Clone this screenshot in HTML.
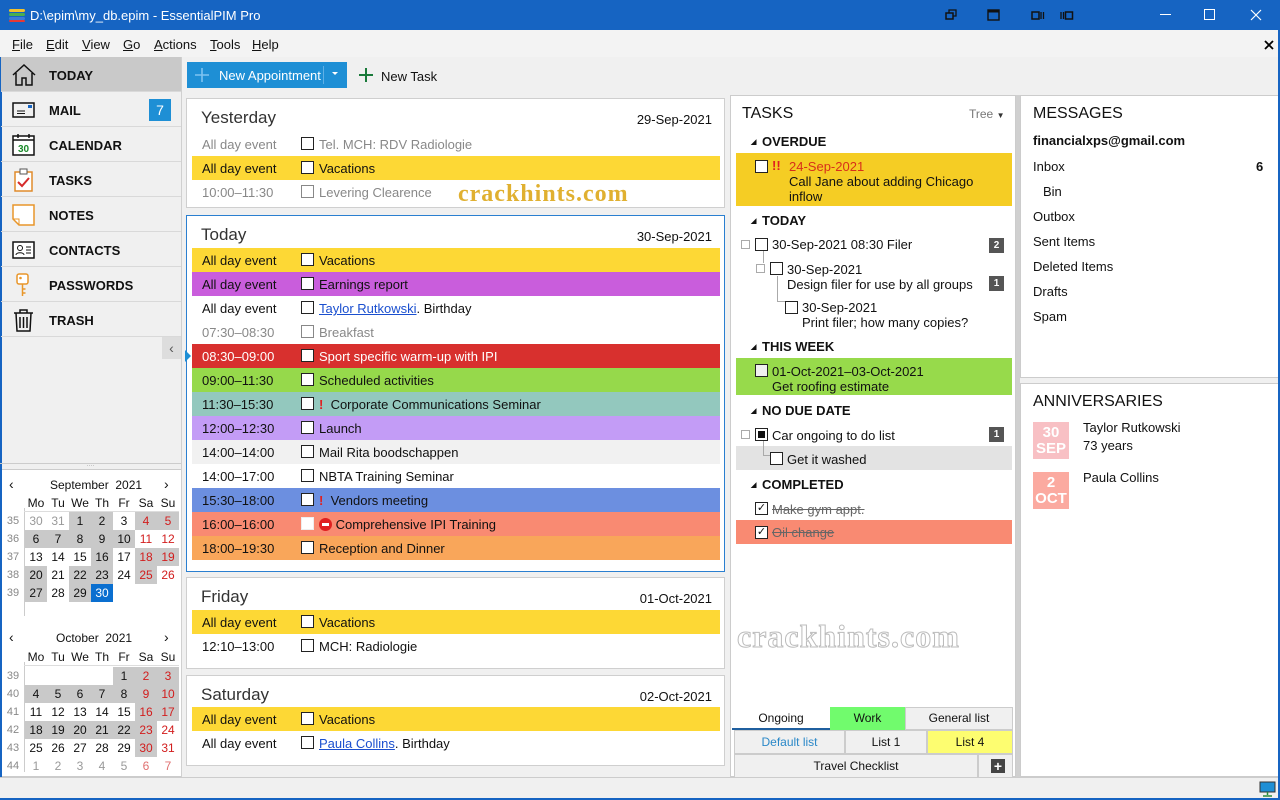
<!DOCTYPE html>
<html><head><meta charset="utf-8">
<style>
*{margin:0;padding:0;box-sizing:border-box}
body{width:1280px;height:800px;position:relative;overflow:hidden;font-family:"Liberation Sans",sans-serif;font-size:13px;color:#111;background:#f0f0f0}
.a{position:absolute}
#title{left:0;top:0;width:1280px;height:30px;background:#1664c2;color:#fff;font-size:13px}
#menu{left:0;top:30px;width:1280px;height:27px;background:#f3f3f3}
#menu span{position:absolute;top:7px;font-size:13px}
.side{left:1px;width:180px;height:35px;border-bottom:1px solid #d9d9d9;font-weight:bold;font-size:13px}
.side span{position:absolute;left:48px;top:11px}
.side svg{position:absolute;left:10px;top:6px}
.card{background:#fff;border:1px solid #cfcfcf;left:186px;width:539px}
.card h2{position:absolute;left:14px;top:9px;font-size:17px;font-weight:normal;color:#333}
.card .d{position:absolute;right:12px;top:13px;font-size:13px}
.row{position:absolute;left:5px;width:528px;height:24px;font-size:13px}
.row .t{position:absolute;left:10px;top:5px}
.row .c{position:absolute;left:109px;top:5px;width:13px;height:13px;border:1px solid #222;background:#fff}
.row .x{position:absolute;left:127px;top:5px}
.cal{font-size:12px}
.cal div{position:absolute;width:22px;height:18px;text-align:center;line-height:18px}
.g{background:#c9c9c9}.r{color:#d21d1d}.m{color:#999}.lr{color:#e07070}.wk{color:#888;font-size:11px}
.sec{position:absolute;left:18px;font-weight:bold;font-size:13px}
.sec:before{content:"◢";font-size:7px;position:absolute;left:-11px;top:4px}
.cb{position:absolute;width:13px;height:13px;border:1px solid #222;background:#fff}
.badge{position:absolute;width:15px;height:15px;background:#555;color:#fff;font-size:10px;text-align:center;line-height:15px;font-weight:bold}
.msg{position:absolute;left:12px;font-size:13px}
</style></head><body>

<div id="title" class="a">
 <svg class="a" style="left:9px;top:7px" width="18" height="16"><rect x="0" y="2" width="16" height="3" rx="1.5" fill="#f2c12e"/><rect x="0" y="6" width="16" height="3" rx="1.5" fill="#4caf50"/><rect x="0" y="10" width="16" height="3" rx="1.5" fill="#3e7bd6"/><rect x="0" y="13" width="16" height="2" rx="1" fill="#e53935"/></svg>
 <span class="a" style="left:30px;top:8px">D:\epim\my_db.epim - EssentialPIM Pro</span>
 <svg class="a" style="left:945px;top:9px" width="12" height="12"><rect x="1" y="4" width="7" height="6" fill="none" stroke="#111" stroke-width="1.5"/><path d="M4 4V1h7v6H8" fill="none" stroke="#111" stroke-width="1.3"/></svg>
 <svg class="a" style="left:987px;top:9px" width="13" height="12"><rect x="1" y="1" width="11" height="10" fill="none" stroke="#111" stroke-width="1.4"/><rect x="1" y="1" width="11" height="2.5" fill="#111"/></svg>
 <svg class="a" style="left:1031px;top:11px" width="14" height="9"><rect x="1" y="1" width="7" height="7" fill="none" stroke="#111" stroke-width="1.5"/><path d="M10 1v7M12.5 1v7" stroke="#111" stroke-width="1.3"/></svg>
 <svg class="a" style="left:1060px;top:11px" width="14" height="9"><rect x="5.5" y="1" width="7" height="7" fill="none" stroke="#111" stroke-width="1.5"/><path d="M1 1v7M3.5 1v7" stroke="#111" stroke-width="1.3"/></svg>
 <svg class="a" style="left:1160px;top:14px" width="11" height="2"><rect width="11" height="1" fill="#fff"/></svg>
 <svg class="a" style="left:1204px;top:9px" width="12" height="12"><rect x="0.5" y="0.5" width="10" height="10" fill="none" stroke="#fff"/></svg>
 <svg class="a" style="left:1250px;top:9px" width="12" height="12"><path d="M1 1l10 10M11 1L1 11" stroke="#fff" stroke-width="1.2"/></svg>
</div>

<div id="menu" class="a">
 <span style="left:12px"><u>F</u>ile</span><span style="left:46px"><u>E</u>dit</span><span style="left:82px"><u>V</u>iew</span><span style="left:123px"><u>G</u>o</span><span style="left:154px"><u>A</u>ctions</span><span style="left:210px"><u>T</u>ools</span><span style="left:252px"><u>H</u>elp</span>
 <svg class="a" style="left:1264px;top:10px" width="10" height="10"><path d="M1 1l8 8M9 1L1 9" stroke="#000" stroke-width="1.8"/></svg>
</div>

<div class="a" style="left:0;top:57px;width:182px;height:720px;background:#f0f0f0;border-right:1px solid #d0d0d0"></div>
<div class="a" style="left:0;top:57px;width:2px;height:743px;background:#1664c2"></div>
<div class="a side" style="top:57px;background:#c9c9c9"><svg width="26" height="24"><path d="M2 12L13 2l11 10M5 10v12h6v-7h4v7h6V10" fill="none" stroke="#111" stroke-width="1.5"/></svg><span>TODAY</span></div>
<div class="a side" style="top:92px"><svg width="26" height="24"><rect x="2" y="5" width="21" height="14" fill="none" stroke="#111" stroke-width="1.5"/><path d="M6 13h8M6 15.5h8" stroke="#111"/><rect x="17" y="7" width="4" height="3" fill="#1664c2"/></svg><span>MAIL</span><div class="a" style="left:148px;top:7px;width:22px;height:22px;background:#1e8fd5;color:#fff;text-align:center;line-height:22px;font-weight:normal;font-size:14px">7</div></div>
<div class="a side" style="top:127px"><svg width="26" height="24"><rect x="2" y="3" width="21" height="19" fill="#fff" stroke="#111" stroke-width="1.5"/><path d="M2 7h21M7 1v4M18 1v4" stroke="#111" stroke-width="1.5"/><text x="12.5" y="19" font-size="10" font-weight="bold" text-anchor="middle" fill="#1a8a2a" font-family="Liberation Sans">30</text></svg><span>CALENDAR</span></div>
<div class="a side" style="top:162px"><svg width="26" height="24"><rect x="4" y="4" width="17" height="19" fill="#fff" stroke="#e08a2a" stroke-width="1.5"/><rect x="9" y="1" width="7" height="5" fill="#fff" stroke="#555"/><path d="M7 14l4 4 7-8" fill="none" stroke="#d62b2b" stroke-width="2"/></svg><span>TASKS</span></div>
<div class="a side" style="top:197px"><svg width="26" height="24"><path d="M2 2h21v20H8l-6-6z" fill="#fff" stroke="#e8962a" stroke-width="1.5"/><path d="M2 16h6v6" fill="none" stroke="#e8962a"/></svg><span>NOTES</span></div>
<div class="a side" style="top:232px"><svg width="26" height="24"><rect x="2" y="4" width="21" height="16" fill="#fff" stroke="#111" stroke-width="1.5"/><circle cx="9" cy="10" r="2.5" fill="none" stroke="#111"/><path d="M5 17c0-3 8-3 8 0M15 9h5M15 12h5M15 15h5" fill="none" stroke="#111"/></svg><span>CONTACTS</span></div>
<div class="a side" style="top:267px"><svg width="26" height="24"><rect x="6" y="1" width="11" height="10" rx="2" fill="#fff" stroke="#e8962a" stroke-width="1.5"/><circle cx="9.5" cy="5" r="1.3" fill="#e8962a"/><path d="M11.5 11v12M11.5 16h3M11.5 20h3" stroke="#e8962a" stroke-width="1.5"/></svg><span>PASSWORDS</span></div>
<div class="a side" style="top:302px"><svg width="26" height="24"><path d="M3 5h19M9 5V2h7v3M5 5l1 18h13l1-18M9 9v11M12.5 9v11M16 9v11" fill="none" stroke="#111" stroke-width="1.5"/></svg><span>TRASH</span></div>
<div class="a" style="left:162px;top:337px;width:19px;height:22px;background:#ddd;color:#555;text-align:center;line-height:22px;font-size:14px">‹</div>
<div class="a" style="left:0;top:463px;width:181px;height:6px;border-top:1px solid #ccc;text-align:center;font-size:6px;color:#888;line-height:4px">····</div>
<div class="a" style="left:2px;top:469px;width:179px;height:308px;background:#fff;border-top:1px solid #ccc;border-bottom:1px solid #ccc"></div>

<div class="a cal" style="left:0;top:474px;width:181px;height:160px">
 <span class="a" style="left:9px;top:2px;font-size:14px">‹</span><span class="a" style="left:50px;top:4px">September&nbsp; 2021</span><span class="a" style="left:164px;top:2px;font-size:14px">›</span>
 <div style="left:25px;top:20px">Mo</div><div style="left:47px;top:20px">Tu</div><div style="left:69px;top:20px">We</div><div style="left:91px;top:20px">Th</div><div style="left:113px;top:20px">Fr</div><div style="left:135px;top:20px">Sa</div><div style="left:157px;top:20px">Su</div>
 <span class="a" style="left:24px;top:34px;width:1px;height:108px;background:#ccc"></span><span class="a" style="left:24px;top:37px;width:155px;height:1px;background:#ddd"></span>
 <div class="wk" style="left:2px;top:38px">35</div><div class="m" style="left:25px;top:38px">30</div><div class="m" style="left:47px;top:38px">31</div><div class="g" style="left:69px;top:38px">1</div><div class="g" style="left:91px;top:38px">2</div><div style="left:113px;top:38px">3</div><div class="g r" style="left:135px;top:38px">4</div><div class="g r" style="left:157px;top:38px">5</div>
 <div class="wk" style="left:2px;top:56px">36</div><div class="g" style="left:25px;top:56px">6</div><div class="g" style="left:47px;top:56px">7</div><div class="g" style="left:69px;top:56px">8</div><div class="g" style="left:91px;top:56px">9</div><div class="g" style="left:113px;top:56px">10</div><div class="r" style="left:135px;top:56px">11</div><div class="r" style="left:157px;top:56px">12</div>
 <div class="wk" style="left:2px;top:74px">37</div><div style="left:25px;top:74px">13</div><div style="left:47px;top:74px">14</div><div style="left:69px;top:74px">15</div><div class="g" style="left:91px;top:74px">16</div><div style="left:113px;top:74px">17</div><div class="g r" style="left:135px;top:74px">18</div><div class="g r" style="left:157px;top:74px">19</div>
 <div class="wk" style="left:2px;top:92px">38</div><div class="g" style="left:25px;top:92px">20</div><div style="left:47px;top:92px">21</div><div class="g" style="left:69px;top:92px">22</div><div class="g" style="left:91px;top:92px">23</div><div style="left:113px;top:92px">24</div><div class="g r" style="left:135px;top:92px">25</div><div class="r" style="left:157px;top:92px">26</div>
 <div class="wk" style="left:2px;top:110px">39</div><div class="g" style="left:25px;top:110px">27</div><div style="left:47px;top:110px">28</div><div class="g" style="left:69px;top:110px">29</div><div style="left:91px;top:110px;background:#0a6fd0;color:#fff">30</div>
</div>
<div class="a cal" style="left:0;top:628px;width:181px;height:150px">
 <span class="a" style="left:9px;top:1px;font-size:14px">‹</span><span class="a" style="left:56px;top:3px">October&nbsp; 2021</span><span class="a" style="left:164px;top:1px;font-size:14px">›</span>
 <div style="left:25px;top:20px">Mo</div><div style="left:47px;top:20px">Tu</div><div style="left:69px;top:20px">We</div><div style="left:91px;top:20px">Th</div><div style="left:113px;top:20px">Fr</div><div style="left:135px;top:20px">Sa</div><div style="left:157px;top:20px">Su</div>
 <span class="a" style="left:24px;top:34px;width:1px;height:110px;background:#ccc"></span><span class="a" style="left:24px;top:37px;width:155px;height:1px;background:#ddd"></span>
 <div class="wk" style="left:2px;top:39px">39</div><div class="g" style="left:113px;top:39px">1</div><div class="g r" style="left:135px;top:39px">2</div><div class="g r" style="left:157px;top:39px">3</div>
 <div class="wk" style="left:2px;top:57px">40</div><div class="g" style="left:25px;top:57px">4</div><div class="g" style="left:47px;top:57px">5</div><div class="g" style="left:69px;top:57px">6</div><div class="g" style="left:91px;top:57px">7</div><div class="g" style="left:113px;top:57px">8</div><div class="g r" style="left:135px;top:57px">9</div><div class="g r" style="left:157px;top:57px">10</div>
 <div class="wk" style="left:2px;top:75px">41</div><div style="left:25px;top:75px">11</div><div style="left:47px;top:75px">12</div><div style="left:69px;top:75px">13</div><div style="left:91px;top:75px">14</div><div style="left:113px;top:75px">15</div><div class="g r" style="left:135px;top:75px">16</div><div class="g r" style="left:157px;top:75px">17</div>
 <div class="wk" style="left:2px;top:93px">42</div><div class="g" style="left:25px;top:93px">18</div><div class="g" style="left:47px;top:93px">19</div><div class="g" style="left:69px;top:93px">20</div><div class="g" style="left:91px;top:93px">21</div><div class="g" style="left:113px;top:93px">22</div><div class="g r" style="left:135px;top:93px">23</div><div class="r" style="left:157px;top:93px">24</div>
 <div class="wk" style="left:2px;top:111px">43</div><div style="left:25px;top:111px">25</div><div style="left:47px;top:111px">26</div><div style="left:69px;top:111px">27</div><div style="left:91px;top:111px">28</div><div style="left:113px;top:111px">29</div><div class="g r" style="left:135px;top:111px">30</div><div class="r" style="left:157px;top:111px">31</div>
 <div class="wk" style="left:2px;top:129px">44</div><div class="m" style="left:25px;top:129px">1</div><div class="m" style="left:47px;top:129px">2</div><div class="m" style="left:69px;top:129px">3</div><div class="m" style="left:91px;top:129px">4</div><div class="m" style="left:113px;top:129px">5</div><div class="lr" style="left:135px;top:129px">6</div><div class="lr" style="left:157px;top:129px">7</div>
</div>

<div class="a" style="left:187px;top:62px;width:160px;height:26px;background:#1e8fd5;color:#fff">
 <svg class="a" style="left:8px;top:6px" width="14" height="14"><path d="M7 0v14M0 7h14" stroke="#7ec4f2" stroke-width="1.6"/></svg>
 <span class="a" style="left:32px;top:6px">New Appointment</span>
 <span class="a" style="left:136px;top:4px;width:1px;height:18px;background:#5fb0e6"></span>
 <span class="a" style="left:145px;top:10px;width:0;height:0;border-left:3px solid transparent;border-right:3px solid transparent;border-top:3px solid #fff"></span>
</div>
<svg class="a" style="left:359px;top:68px" width="14" height="14"><path d="M7 0v14M0 7h14" stroke="#1a7a3a" stroke-width="2"/></svg>
<span class="a" style="left:381px;top:69px">New Task</span>

<div class="a" style="left:182px;top:95px;width:546px;height:682px;background:#f0f0f0"></div>

<div class="a card" style="top:98px;height:110px"><h2>Yesterday</h2><span class="d">29-Sep-2021</span>
 <div class="row" style="top:33px;color:#888"><span class="t">All day event</span><span class="c"></span><span class="x">Tel. MCH: RDV Radiologie</span></div>
 <div class="row" style="top:57px;background:#fdd835"><span class="t">All day event</span><span class="c"></span><span class="x">Vacations</span></div>
 <div class="row" style="top:81px;color:#888"><span class="t">10:00–11:30</span><span class="c" style="border-color:#888"></span><span class="x">Levering Clearence</span></div>
</div>

<div class="a card" style="top:215px;height:357px;border-color:#2a7fd0"><h2>Today</h2><span class="d">30-Sep-2021</span>
 <div class="row" style="top:32px;background:#fdd835"><span class="t">All day event</span><span class="c"></span><span class="x">Vacations</span></div>
 <div class="row" style="top:56px;background:#c95ddc"><span class="t">All day event</span><span class="c"></span><span class="x">Earnings report</span></div>
 <div class="row" style="top:80px"><span class="t">All day event</span><span class="c"></span><span class="x"><u style="color:#1a4fcf">Taylor Rutkowski</u>. Birthday</span></div>
 <div class="row" style="top:104px;color:#888"><span class="t">07:30–08:30</span><span class="c" style="border-color:#888"></span><span class="x">Breakfast</span></div>
 <div class="row" style="top:128px;background:#d8302e;color:#fff"><span class="t">08:30–09:00</span><span class="c"></span><span class="x">Sport specific warm-up with IPI</span></div>
 <div class="row" style="top:152px;background:#96d94b"><span class="t">09:00–11:30</span><span class="c"></span><span class="x">Scheduled activities</span></div>
 <div class="row" style="top:176px;background:#93c8be"><span class="t">11:30–15:30</span><span class="c"></span><span class="x"><b style="color:#e02020">!</b>&nbsp;&nbsp;Corporate Communications Seminar</span></div>
 <div class="row" style="top:200px;background:#c39cf6"><span class="t">12:00–12:30</span><span class="c"></span><span class="x">Launch</span></div>
 <div class="row" style="top:224px;background:#f1f1f1"><span class="t">14:00–14:00</span><span class="c"></span><span class="x">Mail Rita boodschappen</span></div>
 <div class="row" style="top:248px"><span class="t">14:00–17:00</span><span class="c"></span><span class="x">NBTA Training Seminar</span></div>
 <div class="row" style="top:272px;background:#6c8fe0"><span class="t">15:30–18:00</span><span class="c"></span><span class="x"><b style="color:#e02020">!</b>&nbsp;&nbsp;Vendors meeting</span></div>
 <div class="row" style="top:296px;background:#f98a72"><span class="t">16:00–16:00</span><span class="c" style="border-color:#eee"></span><span class="x"><span style="display:inline-block;width:13px;height:13px;border-radius:50%;background:#e02020;vertical-align:-2px;position:relative"><span style="position:absolute;left:3px;top:5px;width:7px;height:3px;background:#fff"></span></span> Comprehensive IPI Training</span></div>
 <div class="row" style="top:320px;background:#f9a65a"><span class="t">18:00–19:30</span><span class="c"></span><span class="x">Reception and Dinner</span></div>
</div>
<div class="a" style="left:185px;top:350px;width:0;height:0;border-top:6px solid transparent;border-bottom:6px solid transparent;border-left:6px solid #1e8fd5"></div>

<div class="a card" style="top:577px;height:92px"><h2>Friday</h2><span class="d">01-Oct-2021</span>
 <div class="row" style="top:32px;background:#fdd835"><span class="t">All day event</span><span class="c"></span><span class="x">Vacations</span></div>
 <div class="row" style="top:56px"><span class="t">12:10–13:00</span><span class="c"></span><span class="x">MCH: Radiologie</span></div>
</div>
<div class="a card" style="top:675px;height:91px"><h2>Saturday</h2><span class="d">02-Oct-2021</span>
 <div class="row" style="top:31px;background:#fdd835"><span class="t">All day event</span><span class="c"></span><span class="x">Vacations</span></div>
 <div class="row" style="top:55px"><span class="t">All day event</span><span class="c"></span><span class="x"><u style="color:#1a4fcf">Paula Collins</u>. Birthday</span></div>
</div>

<div class="a" style="left:730px;top:95px;width:286px;height:682px;background:#fff;border:1px solid #ccc">
 <span class="a" style="left:11px;top:9px;font-size:16px">TASKS</span>
 <span class="a" style="left:238px;top:11px;font-size:12px;color:#777">Tree <span style="font-size:8px;color:#333">▼</span></span>
 <span class="sec" style="left:31px;top:38px">OVERDUE</span>
 <div class="a" style="left:5px;top:57px;width:276px;height:53px;background:#f5cd24"></div>
 <span class="cb" style="left:24px;top:64px"></span><b class="a" style="left:41px;top:62px;color:#e02020">!!</b>
 <span class="a" style="left:58px;top:63px;color:#d8301a">24-Sep-2021</span>
 <span class="a" style="left:58px;top:78px">Call Jane about adding Chicago</span><span class="a" style="left:58px;top:93px">inflow</span>
 <span class="sec" style="left:31px;top:117px">TODAY</span>
 <span class="a" style="left:10px;top:144px;width:9px;height:9px;border:1px solid #aaa"></span>
 <span class="cb" style="left:24px;top:142px"></span><span class="a" style="left:41px;top:141px">30-Sep-2021 08:30 Filer</span><span class="badge" style="left:258px;top:142px">2</span>
 <span class="a" style="left:32px;top:155px;width:1px;height:12px;background:#aaa"></span>
 <span class="a" style="left:25px;top:168px;width:9px;height:9px;border:1px solid #aaa"></span>
 <span class="cb" style="left:39px;top:166px"></span><span class="a" style="left:56px;top:166px">30-Sep-2021</span><span class="a" style="left:56px;top:181px">Design filer for use by all groups</span><span class="badge" style="left:258px;top:180px">1</span>
 <span class="a" style="left:46px;top:180px;width:1px;height:25px;background:#aaa"></span><span class="a" style="left:46px;top:205px;width:8px;height:1px;background:#aaa"></span>
 <span class="cb" style="left:54px;top:205px"></span><span class="a" style="left:71px;top:204px">30-Sep-2021</span><span class="a" style="left:71px;top:219px">Print filer; how many copies?</span>
 <span class="sec" style="left:31px;top:243px">THIS WEEK</span>
 <div class="a" style="left:5px;top:262px;width:276px;height:37px;background:#97da4b"></div>
 <span class="cb" style="left:24px;top:268px;background:#f0f0f0"></span><span class="a" style="left:41px;top:268px">01-Oct-2021–03-Oct-2021</span><span class="a" style="left:41px;top:283px">Get roofing estimate</span>
 <span class="sec" style="left:31px;top:307px">NO DUE DATE</span>
 <span class="a" style="left:10px;top:334px;width:9px;height:9px;border:1px solid #aaa"></span>
 <span class="cb" style="left:24px;top:332px"><span class="a" style="left:2px;top:2px;width:7px;height:7px;background:#111"></span></span><span class="a" style="left:41px;top:332px">Car ongoing to do list</span><span class="badge" style="left:258px;top:331px">1</span>
 <div class="a" style="left:5px;top:350px;width:276px;height:24px;background:#e3e3e3"></div>
 <span class="a" style="left:32px;top:345px;width:1px;height:14px;background:#aaa"></span><span class="a" style="left:32px;top:359px;width:8px;height:1px;background:#aaa"></span>
 <span class="cb" style="left:39px;top:356px"></span><span class="a" style="left:56px;top:356px">Get it washed</span>
 <span class="sec" style="left:31px;top:381px">COMPLETED</span>
 <span class="cb" style="left:24px;top:406px;font-size:11px;line-height:10px;text-align:center">✓</span><span class="a" style="left:41px;top:406px;color:#666;text-decoration:line-through">Make gym appt.</span>
 <div class="a" style="left:5px;top:424px;width:276px;height:24px;background:#f98a72"></div>
 <span class="cb" style="left:24px;top:430px;font-size:11px;line-height:10px;text-align:center">✓</span><span class="a" style="left:41px;top:429px;color:#666;text-decoration:line-through">Oil change</span>
 <div class="a" style="left:1px;top:611px;width:98px;height:23px;background:#fff;border-bottom:2px solid #1f5f9f;text-align:center;line-height:23px;font-size:12px">Ongoing</div>
 <div class="a" style="left:99px;top:611px;width:75px;height:23px;background:#71fb6d;text-align:center;line-height:23px;font-size:12px">Work</div>
 <div class="a" style="left:174px;top:611px;width:108px;height:23px;background:#f0f0f0;border:1px solid #ccc;text-align:center;line-height:21px;font-size:12px">General list</div>
 <div class="a" style="left:3px;top:634px;width:111px;height:24px;background:#f0f0f0;border:1px solid #ccc;color:#2a88c8;text-align:center;line-height:22px;font-size:12px">Default list</div>
 <div class="a" style="left:114px;top:634px;width:82px;height:24px;background:#f0f0f0;border:1px solid #ccc;text-align:center;line-height:22px;font-size:12px">List 1</div>
 <div class="a" style="left:196px;top:634px;width:86px;height:24px;background:#fdfd70;border:1px solid #ccc;text-align:center;line-height:22px;font-size:12px">List 4</div>
 <div class="a" style="left:3px;top:658px;width:244px;height:24px;background:#f0f0f0;border:1px solid #ccc;text-align:center;line-height:22px;font-size:12px">Travel Checklist</div>
 <div class="a" style="left:247px;top:658px;width:35px;height:24px;background:#f0f0f0;border:1px solid #ccc"><span class="a" style="left:12px;top:4px;width:14px;height:14px;background:#444;color:#fff;font-weight:bold;text-align:center;line-height:14px;font-size:14px">+</span></div>
</div>
<div class="a" style="left:1016px;top:95px;width:4px;height:682px;background:#d0d0d0"></div>

<div class="a" style="left:1020px;top:95px;width:259px;height:283px;background:#fff;border:1px solid #ccc">
 <span class="a" style="left:12px;top:9px;font-size:16px">MESSAGES</span>
 <span class="msg" style="top:37px;font-weight:bold">financialxps@gmail.com</span>
 <span class="msg" style="top:63px">Inbox</span><b class="a" style="left:235px;top:63px">6</b>
 <span class="msg" style="left:22px;top:88px">Bin</span>
 <span class="msg" style="top:113px">Outbox</span>
 <span class="msg" style="top:138px">Sent Items</span>
 <span class="msg" style="top:163px">Deleted Items</span>
 <span class="msg" style="top:188px">Drafts</span>
 <span class="msg" style="top:213px">Spam</span>
</div>
<div class="a" style="left:1020px;top:383px;width:259px;height:394px;background:#fff;border:1px solid #ccc">
 <span class="a" style="left:12px;top:9px;font-size:16px">ANNIVERSARIES</span>
 <div class="a" style="left:12px;top:38px;width:36px;height:37px;background:#f8c0c4;color:#fff;font-weight:bold;text-align:center;font-size:15px;line-height:16px;padding-top:3px">30<br>SEP</div>
 <span class="a" style="left:62px;top:36px">Taylor Rutkowski</span><span class="a" style="left:62px;top:54px">73 years</span>
 <div class="a" style="left:12px;top:88px;width:36px;height:37px;background:#fbaaa0;color:#fff;font-weight:bold;text-align:center;font-size:15px;line-height:16px;padding-top:3px">2<br>OCT</div>
 <span class="a" style="left:62px;top:86px">Paula Collins</span>
</div>

<span class="a" style="left:458px;top:181px;font-family:'Liberation Serif',serif;font-weight:bold;font-size:24px;color:#e0b030;letter-spacing:1px">crackhints.com</span>
<span class="a" style="left:737px;top:618px;font-family:'Liberation Serif',serif;font-weight:bold;font-size:32px;color:#fff;-webkit-text-stroke:1px #bbb;letter-spacing:1px">crackhints.com</span>

<div class="a" style="left:0;top:777px;width:1280px;height:23px;background:#f0f0f0;border-top:1px solid #ccc">
 <svg class="a" style="left:1259px;top:3px" width="17" height="16"><rect x="1" y="1" width="15" height="10" fill="#1e8fd5" stroke="#333"/><path d="M8.5 11v3M4 15h9" stroke="#2a8a3a" stroke-width="1.5"/></svg>
</div>
<div class="a" style="left:0;top:798px;width:1280px;height:2px;background:#1664c2"></div>
<div class="a" style="left:1278px;top:30px;width:2px;height:770px;background:#1664c2"></div>
</body></html>
